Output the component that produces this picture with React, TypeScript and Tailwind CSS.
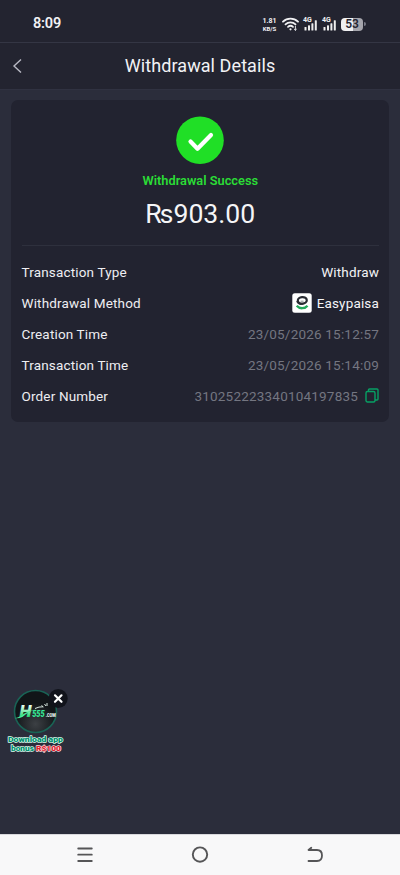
import React from 'react';

function Signal() {
  return (
    <div className="relative h-[14px] w-[13px]">
      <span className="absolute -left-px -top-px text-[7px] font-bold leading-[8px]">4G</span>
      <svg className="absolute inset-0" width="13" height="14" viewBox="0 0 13 14" fill="#eee">
        <rect x="0.5" y="10" width="2" height="3.5" rx=".6" />
        <rect x="4" y="8.3" width="2" height="5.2" rx=".6" />
        <rect x="7.4" y="6.2" width="2" height="7.3" rx=".6" />
        <rect x="10.8" y="3.2" width="2" height="10.3" rx=".6" />
      </svg>
    </div>
  );
}

function StatusBar() {
  return (
    <div className="flex h-[42px] items-center justify-between pl-[33px] pr-[34px] pt-[6px] text-[#f1f1f4]">
      <span className="text-[14.5px] font-semibold tracking-[-0.2px]">8:09</span>
      <div className="flex items-center">
        <div className="mr-[5px] w-[15px] text-center font-bold">
          <div className="text-[7px] leading-[8px]">1.81</div>
          <div className="text-[6px] leading-[7px]">KB/S</div>
        </div>
        <svg className="mb-[1px] mr-[5px]" width="17" height="14" viewBox="0 0 17 14" fill="none" stroke="#f1f1f4" strokeWidth="1.8" strokeLinecap="round">
          <path d="M1 4.7C5.2.6 11.8.6 16 4.7" />
          <path d="M3.5 7.4c2.8-2.7 7.2-2.7 10 0" />
          <path d="M6 9.9c1.4-1.3 3.6-1.3 5 0" />
          <path d="M8.5 12.3h0" strokeWidth="2.2" />
          <path d="M13.4 9.2v4m-1-.9 1 .9 1-.9" strokeWidth=".9" />
        </svg>
        <div className="mr-[6px]"><Signal /></div>
        <div className="mr-[5px]"><Signal /></div>
        <div className="flex h-[13px] w-[22px] items-center justify-center rounded-[4px] bg-[linear-gradient(90deg,#f0f0f2_54%,#a5a5ac_54%)] text-[12px] font-semibold leading-[13px] text-[#252632]">53</div>
        <div className="ml-px h-[4px] w-[2px] rounded-r bg-[#777985]" />
      </div>
    </div>
  );
}

function EasypaisaLogo() {
  return (
    <svg className="mb-px mr-[5px]" width="20" height="20" viewBox="0 0 20 20" fill="none">
      <rect x=".3" y=".3" width="19.4" height="19.4" rx="2.5" fill="#fff" />
      <ellipse cx="10.3" cy="7.4" rx="4.5" ry="3.3" stroke="#292c33" strokeWidth="2.2" transform="rotate(-5 10.3 7.4)" />
      <path d="M8.6 8.2h3" stroke="#6b7075" strokeWidth=".8" />
      <path d="M5 8c.3 3.2 3.5 3.6 6.4 2.8" stroke="#292c33" strokeWidth="1.5" />
      <path d="M4.7 12.8c2.8 3.3 8.2 3.2 10.8-.1" stroke="#23a85b" strokeWidth="2.3" />
    </svg>
  );
}

function Row({ label, children, muted }: { label: string; children: React.ReactNode; muted?: boolean }) {
  return (
    <div className="flex h-[31px] items-center justify-between text-[13.5px] tracking-[0.16px]">
      <span className="text-[#eeeef2]">{label}</span>
      <span className={muted ? 'flex items-center tracking-[0.2px] text-[#747681]' : 'flex items-center text-[#f4f4f6]'}>{children}</span>
    </div>
  );
}

function Promo() {
  return (
    <div className="absolute left-[7px] top-[687px] h-[66px] w-[62px]">
      <svg width="62" height="66" viewBox="0 0 62 66">
        <defs>
          <radialGradient id="disc" cy=".8">
            <stop offset="0" stopColor="#3c4044" />
            <stop offset="1" stopColor="#111518" />
          </radialGradient>
          <linearGradient id="logo" x2="0" y2="1">
            <stop offset=".2" stopColor="#f3fff7" />
            <stop offset=".8" stopColor="#20d873" />
          </linearGradient>
        </defs>
        <circle cx="28.5" cy="24.5" r="21" fill="url(#disc)" stroke="#196355" strokeWidth="1.6" />
        <text x="12.5" y="30" fontSize="17" fontWeight="900" fontStyle="italic" fill="url(#logo)" textLength="12" lengthAdjust="spacingAndGlyphs">H</text>
        <path d="M7.5 31q5-.3 9-4 5-3.500 13-4.500-7 1.500-11 5-4 4.500-11 3.500z" fill="#46ed98" />
        <path d="M28 21.500q4-2 8-1.700M34.500 18.500l2 1.500m1-3 1.500 2m1-3v3" stroke="#d9eae2" strokeWidth="1" fill="none" />
        <text x="25.200" y="30" fontSize="9" fontWeight="900" fontStyle="italic" fill="#35ed98" textLength="12.500" lengthAdjust="spacingAndGlyphs">555</text>
        <text x="38.700" y="29.800" fontSize="5.400" fontWeight="900" fill="#edf8f4" textLength="10" lengthAdjust="spacingAndGlyphs">.COM</text>
        <circle cx="51.2" cy="11.5" r="9.5" fill="#11131b" />
        <path d="m48 8.3 6.5 6.5m0-6.5L48 14.8" stroke="#fff" strokeWidth="2.2" strokeLinecap="round" />
        <g fontSize="8" fontWeight="900" stroke="#d9fff1" strokeWidth="1.3" paintOrder="stroke" strokeLinejoin="round" fill="#008c6c">
          <text x="1" y="54.5" textLength="55" lengthAdjust="spacingAndGlyphs">Download app</text>
          <text x="4" y="63.5" textLength="23" lengthAdjust="spacingAndGlyphs">bonus</text>
          <text x="29" y="63.5" textLength="25" lengthAdjust="spacingAndGlyphs" fill="#e01c2e" stroke="#ffdfe1">R$100</text>
        </g>
      </svg>
    </div>
  );
}

export default function App() {
  return (
    <div className="relative flex h-[875px] w-[400px] flex-col overflow-hidden bg-[#2b2d3b] font-['Roboto',sans-serif]">
      <header className="h-[90px] border-b border-[#303241] bg-[#232430]">
        <StatusBar />
        <div className="flex h-[47px] items-center border-t border-[#343644] px-[12px]">
          <svg width="12" height="16" viewBox="0 0 12 16" fill="none" stroke="#b9bac4" strokeWidth="1.4"><path d="M9 1.5 2 8l7 6.5" /></svg>
          <h1 className="flex-1 pr-[12px] text-center text-[18px] leading-[24px] tracking-[0.08px] text-[#f2f2f5]">Withdrawal Details</h1>
        </div>
      </header>
      <main className="flex-1 px-[11px] pt-[10px]">
        <section className="h-[322px] rounded-[7px] bg-[#222330] pl-[10.5px] pr-[10px] pt-[16px]">
          <div className="flex h-[130px] flex-col items-center border-b border-[#2e303d]">
            <svg width="48" height="48" viewBox="0 0 48 48" className="shrink-0">
              <circle cx="24" cy="24.2" r="23.8" fill="#20df26" />
              <path d="m14.5 25.5 7 7.3L35 19" fill="none" stroke="#fff" strokeWidth="4.2" strokeLinecap="round" strokeLinejoin="round" />
            </svg>
            <p className="mt-[8px] text-[12.8px] font-semibold leading-[18px] text-[#2bdc36]">Withdrawal Success</p>
            <p className="mt-[8px] text-[26.6px] leading-[32px] text-[#f5f5f7]">₨903.00</p>
          </div>
          <div className="pt-[11px]">
            <Row label="Transaction Type">Withdraw</Row>
            <Row label="Withdrawal Method"><EasypaisaLogo />Easypaisa</Row>
            <Row label="Creation Time" muted>23/05/2026 15:12:57</Row>
            <Row label="Transaction Time" muted>23/05/2026 15:14:09</Row>
            <Row label="Order Number" muted>
              310252223340104197835
              <svg className="mb-[2px] ml-[7px]" width="14" height="15" viewBox="0 0 14 15" fill="none" stroke="#07a064" strokeWidth="1.4">
                <rect x="1" y="3.5" width="9" height="10.5" rx="1.5" />
                <path d="M3.5 3.5V2q0-1 1-1H12q1 0 1 1v9q0 1-1 1h-2" />
              </svg>
            </Row>
          </div>
        </section>
      </main>
      <Promo />
      <nav className="flex h-[41px] items-center justify-between border-t border-[#d9d9dd] bg-[#f8f8f9] px-[76px]">
        <svg width="18" height="18" viewBox="0 0 18 18" stroke="#555557" strokeWidth="1.8" strokeLinecap="round"><path d="M2.2 2.5h13.6M2.2 8.7h13.6M2.2 15h13.6" /></svg>
        <svg width="18" height="18" viewBox="0 0 18 18" fill="none" stroke="#555557" strokeWidth="1.9"><circle cx="9" cy="8.6" r="7.2" /></svg>
        <svg width="18" height="18" viewBox="0 0 18 18" fill="none" stroke="#555557" strokeWidth="1.8" strokeLinecap="round" strokeLinejoin="round"><path d="M5.3 1.8 2.5 4H11q5 0 5 5.4T11 15H2.5" /></svg>
      </nav>
    </div>
  );
}
